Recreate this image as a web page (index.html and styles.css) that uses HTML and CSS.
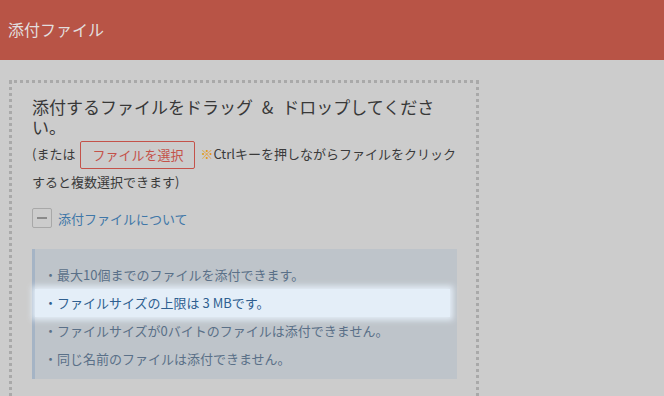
FILE: index.html
```html
<!DOCTYPE html>
<html lang="ja">
<head>
    <meta charset="UTF-8">
    <meta name="viewport" content="width=device-width, initial-scale=1.0">
    <title>添付ファイル</title>
    <link rel="stylesheet" href="styles.css">
</head>
<body>
    <header class="title-bar">添付ファイル</header>

    <div class="drop-zone">
        <p class="drop-title">添付するファイルをドラッグ &amp; ドロップしてください。</p>
        <p class="drop-note">(または<button class="pick-btn">ファイルを選択</button><span class="mark">※</span>Ctrlキーを押しながらファイルをクリックすると複数選択できます)</p>

        <div class="toggle">
            <span class="toggle-icon"></span>
            <span class="toggle-label">添付ファイルについて</span>
        </div>

        <ul class="info">
            <li>・最大10個までのファイルを添付できます。</li>
            <li class="active">・ファイルサイズの上限は 3&nbsp;MBです。</li>
            <li>・ファイルサイズが0バイトのファイルは添付できません。</li>
            <li>・同じ名前のファイルは添付できません。</li>
        </ul>
    </div>
</body>
</html>
```

FILE: styles.css
```css
body {
    margin: 0;
    background: #cccccc;
    font-family: "Noto Sans CJK JP", "Noto Sans", sans-serif;
    color: #3a3a3a;
    font-size: 13px;
}

.title-bar {
    height: 60px;
    line-height: 58px;
    padding-left: 8px;
    background: #b85446;
    color: #e2dede;
    font-size: 16px;
}

.drop-zone {
    box-sizing: border-box;
    width: 470px;
    height: 360px;
    margin: 20px 0 0 9px;
    padding: 14px 17px 14px 20px;
    border: 3px dotted #a9a9a9;
}

.drop-title {
    margin: 0;
    font-size: 17px;
    line-height: 20px;
    word-spacing: 5px;
    color: #383838;
}

.drop-note {
    margin: 4px 0 0;
    line-height: 25px;
}

.pick-btn {
    font: inherit;
    line-height: 20px;
    color: #c4524a;
    background: transparent;
    border: 1px solid #c4524a;
    border-radius: 2px;
    padding: 2px 11px;
    height: 28px;
    margin: 0 5px;
    vertical-align: middle;
}

.mark {
    color: #e59a1a;
}

.toggle {
    display: flex;
    align-items: center;
    gap: 6px;
    margin-top: 14px;
}

.toggle-icon {
    box-sizing: border-box;
    width: 20px;
    height: 20px;
    border: 1px solid #a8a8a8;
    border-radius: 2px;
    display: flex;
    align-items: center;
    justify-content: center;
}

.toggle-icon::before {
    content: "";
    width: 10px;
    height: 2px;
    background: #8a8a8a;
}

.toggle-label {
    color: #3f77a8;
}

.info {
    list-style: none;
    width: 413px;
    margin: 21px 0 0;
    padding: 12px 0 6px 9px;
    background: #bec4ca;
    border-left: 3px solid #a5b4c5;
}

.info li {
    height: 28px;
    line-height: 28px;
    color: #5a7088;
}

.info li.active {
    margin: 0 7px 0 -9px;
    padding-left: 9px;
    background: #e4eef8;
    box-shadow: 0 0 6px 3px #e4eef8;
    color: #2f5f90;
}
```
